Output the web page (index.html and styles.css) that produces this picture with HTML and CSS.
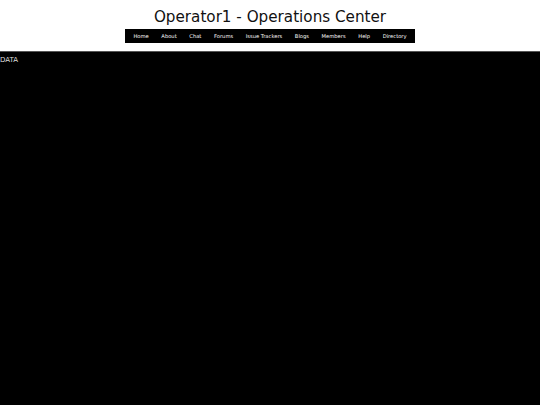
FILE: index.html
```html
<!DOCTYPE html>
<html>
<head>
<meta charset="utf-8">
<link rel="stylesheet" href="styles.css">
</head>
<body>
<header class="header">
  <h1 class="title">Operator1 - Operations Center</h1>
  <nav class="nav">
    <a href="#">Home</a>
    <a href="#">About</a>
    <a href="#">Chat</a>
    <a href="#">Forums</a>
    <a href="#">Issue Trackers</a>
    <a href="#">Blogs</a>
    <a href="#">Members</a>
    <a href="#">Help</a>
    <a href="#">Directory</a>
  </nav>
</header>
<main class="main">DATA</main>
</body>
</html>
```
FILE: styles.css
```css
html, body {
  margin: 0;
  padding: 0;
  height: 100%;
}
body {
  font-family: "DejaVu Sans", Verdana, sans-serif;
  background: #000;
  display: flex;
  flex-direction: column;
}
.header {
  background: #fff;
  display: flex;
  flex-direction: column;
  align-items: center;
  padding-top: 8px;
  height: 52px;
  box-sizing: border-box;
  border-bottom: 1px solid #555;
}
.title {
  margin: 0;
  font-weight: normal;
  font-size: 15.2px;
  line-height: 18px;
  color: #111;
}
.nav {
  margin-top: 3px;
  background: #000;
  display: flex;
  justify-content: center;
  gap: 12.6px;
  width: 290px;
  height: 14px;
  align-items: center;
  box-sizing: border-box;
}
.nav a {
  color: #fff;
  text-decoration: none;
  font-size: 5.2px;
}
.main {
  flex: 1;
  color: #ddd;
  font-size: 7px;
  padding-top: 4px;
}
```
